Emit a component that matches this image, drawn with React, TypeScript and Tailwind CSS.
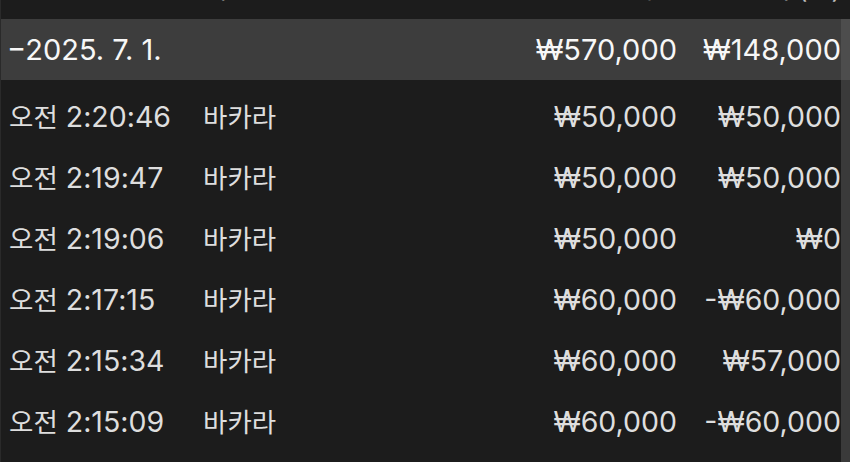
const ROWS = [
  { time: "2:20:46", game: "바카라", bet: "₩50,000", result: "₩50,000" },
  { time: "2:19:47", game: "바카라", bet: "₩50,000", result: "₩50,000" },
  { time: "2:19:06", game: "바카라", bet: "₩50,000", result: "₩0" },
  { time: "2:17:15", game: "바카라", bet: "₩60,000", result: "-₩60,000" },
  { time: "2:15:34", game: "바카라", bet: "₩60,000", result: "₩57,000" },
  { time: "2:15:09", game: "바카라", bet: "₩60,000", result: "-₩60,000" },
];

export default function App() {
  return (
    <div
      className="w-[850px] h-[462px] overflow-hidden bg-[#1c1c1c] border-l border-[#2a2a2a]"
      style={{ fontFamily: '"Inter", "Noto Sans CJK KR", sans-serif' }}
    >
      {/* Header (scrolled mostly out of view) */}
      <div className="flex h-[19px] overflow-hidden text-[26px] leading-none text-[#bdbdbd]">
        <div className="w-[202px] pl-[8px] -mt-[24px]">일시</div>
        <div className="flex-1 -mt-[24px]">게임</div>
        <div className="w-[160px] text-right -mt-[24px]">베팅</div>
        <div className="w-[164px] text-right -mt-[24px]">손익 (원)</div>
        <div className="w-[9px]" />
      </div>

      {/* Date group */}
      <div className="flex h-[61px] items-center bg-[#3d3d3d] text-[29px] text-[#f7f7f7]">
        <div className="flex-1 pl-[6px]">−2025. 7. 1.</div>
        <div className="w-[180px] text-right">₩570,000</div>
        <div className="w-[164px] text-right">₩148,000</div>
        <div className="w-[9px] h-full bg-[#4d4d4d]" />
      </div>

      {/* Rows */}
      <div className="flex pt-[7px]">
        <div className="flex-1">
          {ROWS.map((r) => (
            <div key={r.time} className="flex h-[61px] items-center text-[28.5px] text-[#dedede]">
              <div className="w-[202px] pl-[8px]">
                <span className="text-[26.5px]">오전</span> {r.time}
              </div>
              <div className="flex-1 text-[26.5px]">{r.game}</div>
              <div className="w-[160px] text-right">{r.bet}</div>
              <div className="w-[164px] text-right">{r.result}</div>
            </div>
          ))}
        </div>
        <div className="w-[9px] -mt-[7px] h-[400px] bg-[#3a3a3a]" />
      </div>
    </div>
  );
}
